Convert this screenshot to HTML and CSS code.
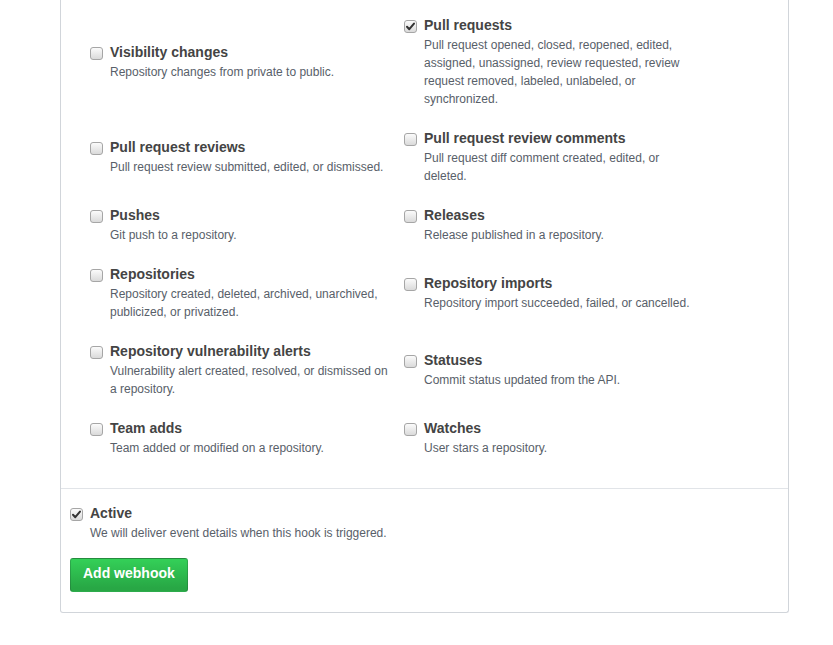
FILE: index.html
```html
<!DOCTYPE html>
<html>
<head>
<meta charset="utf-8">
<link rel="stylesheet" href="styles.css">
</head>
<body>
<div class="box">
  <div class="events">
    <div class="item"><span class="cb"></span><div class="txt"><div class="title">Visibility changes</div><div class="desc">Repository changes from private to public.</div></div></div>
    <div class="item"><span class="cb checked"><svg viewBox="0 0 13 13" width="13" height="13"><path d="M3 6.8 L5.3 9.2 L10 3.6" fill="none" stroke="#333" stroke-width="2" stroke-linecap="round" stroke-linejoin="round"/></svg></span><div class="txt"><div class="title">Pull requests</div><div class="desc">Pull request opened, closed, reopened, edited, assigned, unassigned, review requested, review request removed, labeled, unlabeled, or synchronized.</div></div></div>

    <div class="item"><span class="cb"></span><div class="txt"><div class="title">Pull request reviews</div><div class="desc">Pull request review submitted, edited, or dismissed.</div></div></div>
    <div class="item"><span class="cb"></span><div class="txt"><div class="title">Pull request review comments</div><div class="desc">Pull request diff comment created, edited, or deleted.</div></div></div>

    <div class="item"><span class="cb"></span><div class="txt"><div class="title">Pushes</div><div class="desc">Git push to a repository.</div></div></div>
    <div class="item"><span class="cb"></span><div class="txt"><div class="title">Releases</div><div class="desc">Release published in a repository.</div></div></div>

    <div class="item"><span class="cb"></span><div class="txt"><div class="title">Repositories</div><div class="desc">Repository created, deleted, archived, unarchived, publicized, or privatized.</div></div></div>
    <div class="item"><span class="cb"></span><div class="txt"><div class="title">Repository imports</div><div class="desc">Repository import succeeded, failed, or cancelled.</div></div></div>

    <div class="item"><span class="cb"></span><div class="txt"><div class="title">Repository vulnerability alerts</div><div class="desc">Vulnerability alert created, resolved, or dismissed on a repository.</div></div></div>
    <div class="item"><span class="cb"></span><div class="txt"><div class="title">Statuses</div><div class="desc">Commit status updated from the API.</div></div></div>

    <div class="item"><span class="cb"></span><div class="txt"><div class="title">Team adds</div><div class="desc">Team added or modified on a repository.</div></div></div>
    <div class="item"><span class="cb"></span><div class="txt"><div class="title">Watches</div><div class="desc">User stars a repository.</div></div></div>
  </div>
  <div class="footer">
    <div class="item"><span class="cb checked"><svg viewBox="0 0 13 13" width="13" height="13"><path d="M3 6.8 L5.3 9.2 L10 3.6" fill="none" stroke="#333" stroke-width="2" stroke-linecap="round" stroke-linejoin="round"/></svg></span><div class="txt"><div class="title">Active</div><div class="desc">We will deliver event details when this hook is triggered.</div></div></div>
    <button class="btn">Add webhook</button>
  </div>
</div>
</body>
</html>
```
FILE: styles.css
```css
html, body {
  margin: 0;
  padding: 0;
  background: #fff;
  font-family: "Liberation Sans", Arial, sans-serif;
}
.box {
  margin-left: 60px;
  width: 729px;
  box-sizing: border-box;
  border: 1px solid #d1d5da;
  border-top: none;
  border-radius: 0 0 3px 3px;
}
.events {
  display: grid;
  grid-template-columns: 314px 314px;
  row-gap: 20px;
  align-items: center;
  padding: 15px 0 31px 29px;
}
.item {
  display: flex;
  align-items: flex-start;
}
.cb {
  flex: none;
  width: 13px;
  height: 13px;
  box-sizing: border-box;
  margin-top: 5px;
  margin-right: 7px;
  border: 1px solid #a6a6a6;
  border-radius: 3px;
  background: linear-gradient(#fbfbfb, #dadada);
  display: flex;
  align-items: center;
  justify-content: center;
  overflow: hidden;
}
.cb svg {
  flex: none;
  display: block;
}
.txt {
  padding-right: 14px;
}
.title {
  font-size: 14px;
  font-weight: bold;
  line-height: 20px;
  color: #444;
}
.desc {
  margin-top: 1px;
  font-size: 12px;
  line-height: 18px;
  color: #586069;
}
.footer {
  border-top: 1px solid #e1e4e8;
  padding: 14px 9px 20px;
}
.btn {
  display: block;
  margin-top: 16px;
  font-family: "Liberation Sans", Arial, sans-serif;
  font-size: 14px;
  font-weight: bold;
  line-height: 20px;
  color: #fff;
  padding: 4px 12px 8px;
  border: 1px solid rgba(27, 31, 35, 0.2);
  border-radius: 3px;
  background: linear-gradient(-180deg, #34d058 0%, #28a745 90%);
}
```
